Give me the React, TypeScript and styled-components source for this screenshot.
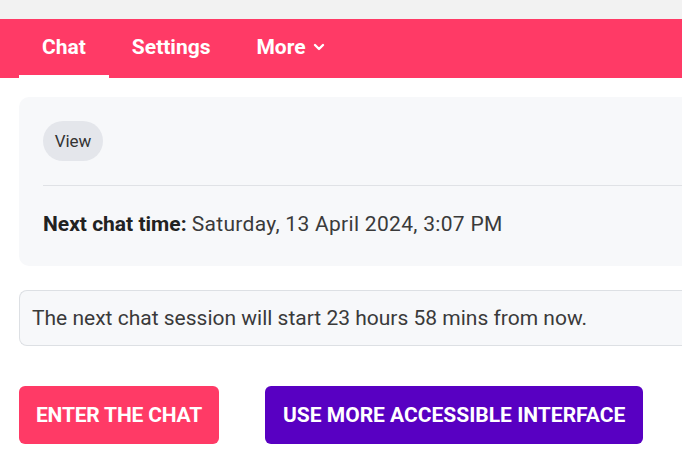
import React from "react";
import styled, { createGlobalStyle } from "styled-components";

const GlobalStyle = createGlobalStyle`
  html, body {
    margin: 0;
    padding: 0;
    background: #ffffff;
    font-family: "Roboto", "Liberation Sans", sans-serif;
    color: #2b2b2b;
    overflow: hidden;
  }
`;

const colors = {
  pink: "#ff3a66",
  purple: "#5800c2",
  panel: "#f7f8fa",
  border: "#dde0e4",
};

const TopStrip = styled.div`
  height: 19px;
  background: #f2f2f2;
`;

const NavBar = styled.nav`
  display: flex;
  align-items: stretch;
  height: 59px;
  padding-left: 19px;
  background: ${colors.pink};
`;

const NavTab = styled.div<{ $active?: boolean }>`
  display: flex;
  align-items: center;
  gap: 7px;
  padding: 0 23px 1px;
  font-size: 21px;
  font-weight: 700;
  color: #ffffff;
  border-bottom: 3px solid ${(p) => (p.$active ? "#ffffff" : "transparent")};
`;

const Content = styled.main`
  display: flex;
  flex-direction: column;
  padding: 19px 0 0 19px;
`;

const Card = styled.section`
  background: ${colors.panel};
  border-radius: 10px 0 0 10px;
  padding: 24px 0 24px 24px;
  height: 169px;
  box-sizing: border-box;
`;

const Pill = styled.span`
  display: inline-flex;
  align-items: center;
  justify-content: center;
  width: 60px;
  height: 40px;
  border-radius: 20px;
  background: #e4e6eb;
  font-size: 17px;
  color: #333;
`;

const Divider = styled.hr`
  margin: 24px 0 0;
  border: none;
  border-top: 1px solid #e0e2e6;
`;

const InfoLine = styled.p`
  margin: 26px 0 0;
  font-size: 21px;
  color: #3a3a3a;

  strong {
    font-weight: 700;
    color: #222;
  }
`;

const DateText = styled.span`
  letter-spacing: 0.3px;
`;

const Notice = styled.div`
  margin-top: 24px;
  height: 56px;
  box-sizing: border-box;
  display: flex;
  align-items: center;
  padding-left: 12px;
  background: ${colors.panel};
  border: 1px solid ${colors.border};
  border-right: none;
  border-radius: 8px 0 0 8px;
  font-size: 21px;
  color: #3a3a3a;
`;

const ButtonRow = styled.div`
  display: flex;
  gap: 46px;
  margin-top: 40px;
`;

const ActionButton = styled.button<{ $tone: "pink" | "purple" }>`
  height: 58px;
  padding: 0 ${(p) => (p.$tone === "pink" ? "17px" : "18px")};
  border: none;
  border-radius: 6px;
  background: ${(p) => (p.$tone === "pink" ? colors.pink : colors.purple)};
  color: #ffffff;
  font-family: "Roboto", sans-serif;
  font-size: 21px;
  font-weight: 700;
  letter-spacing: ${(p) => (p.$tone === "pink" ? "-0.2px" : "0")};
  text-transform: uppercase;
  cursor: pointer;
`;

const Chevron = () => (
  <svg width="12" height="12" viewBox="0 0 12 12" aria-hidden>
    <path d="M2 4l4 4 4-4" fill="none" stroke="#fff" strokeWidth="2.4" strokeLinecap="round" strokeLinejoin="round" />
  </svg>
);

export default function App() {
  return (
    <>
      <GlobalStyle />
      <TopStrip />
      <NavBar>
        <NavTab $active>Chat</NavTab>
        <NavTab>Settings</NavTab>
        <NavTab>
          More <Chevron />
        </NavTab>
      </NavBar>
      <Content>
        <Card>
          <Pill>View</Pill>
          <Divider />
          <InfoLine>
            <strong>Next chat time:</strong>{" "}
            <DateText>Saturday, 13 April 2024, 3:07 PM</DateText>
          </InfoLine>
        </Card>
        <Notice>The next chat session will start 23 hours 58 mins from now.</Notice>
        <ButtonRow>
          <ActionButton $tone="pink">Enter the chat</ActionButton>
          <ActionButton $tone="purple">Use more accessible interface</ActionButton>
        </ButtonRow>
      </Content>
    </>
  );
}
